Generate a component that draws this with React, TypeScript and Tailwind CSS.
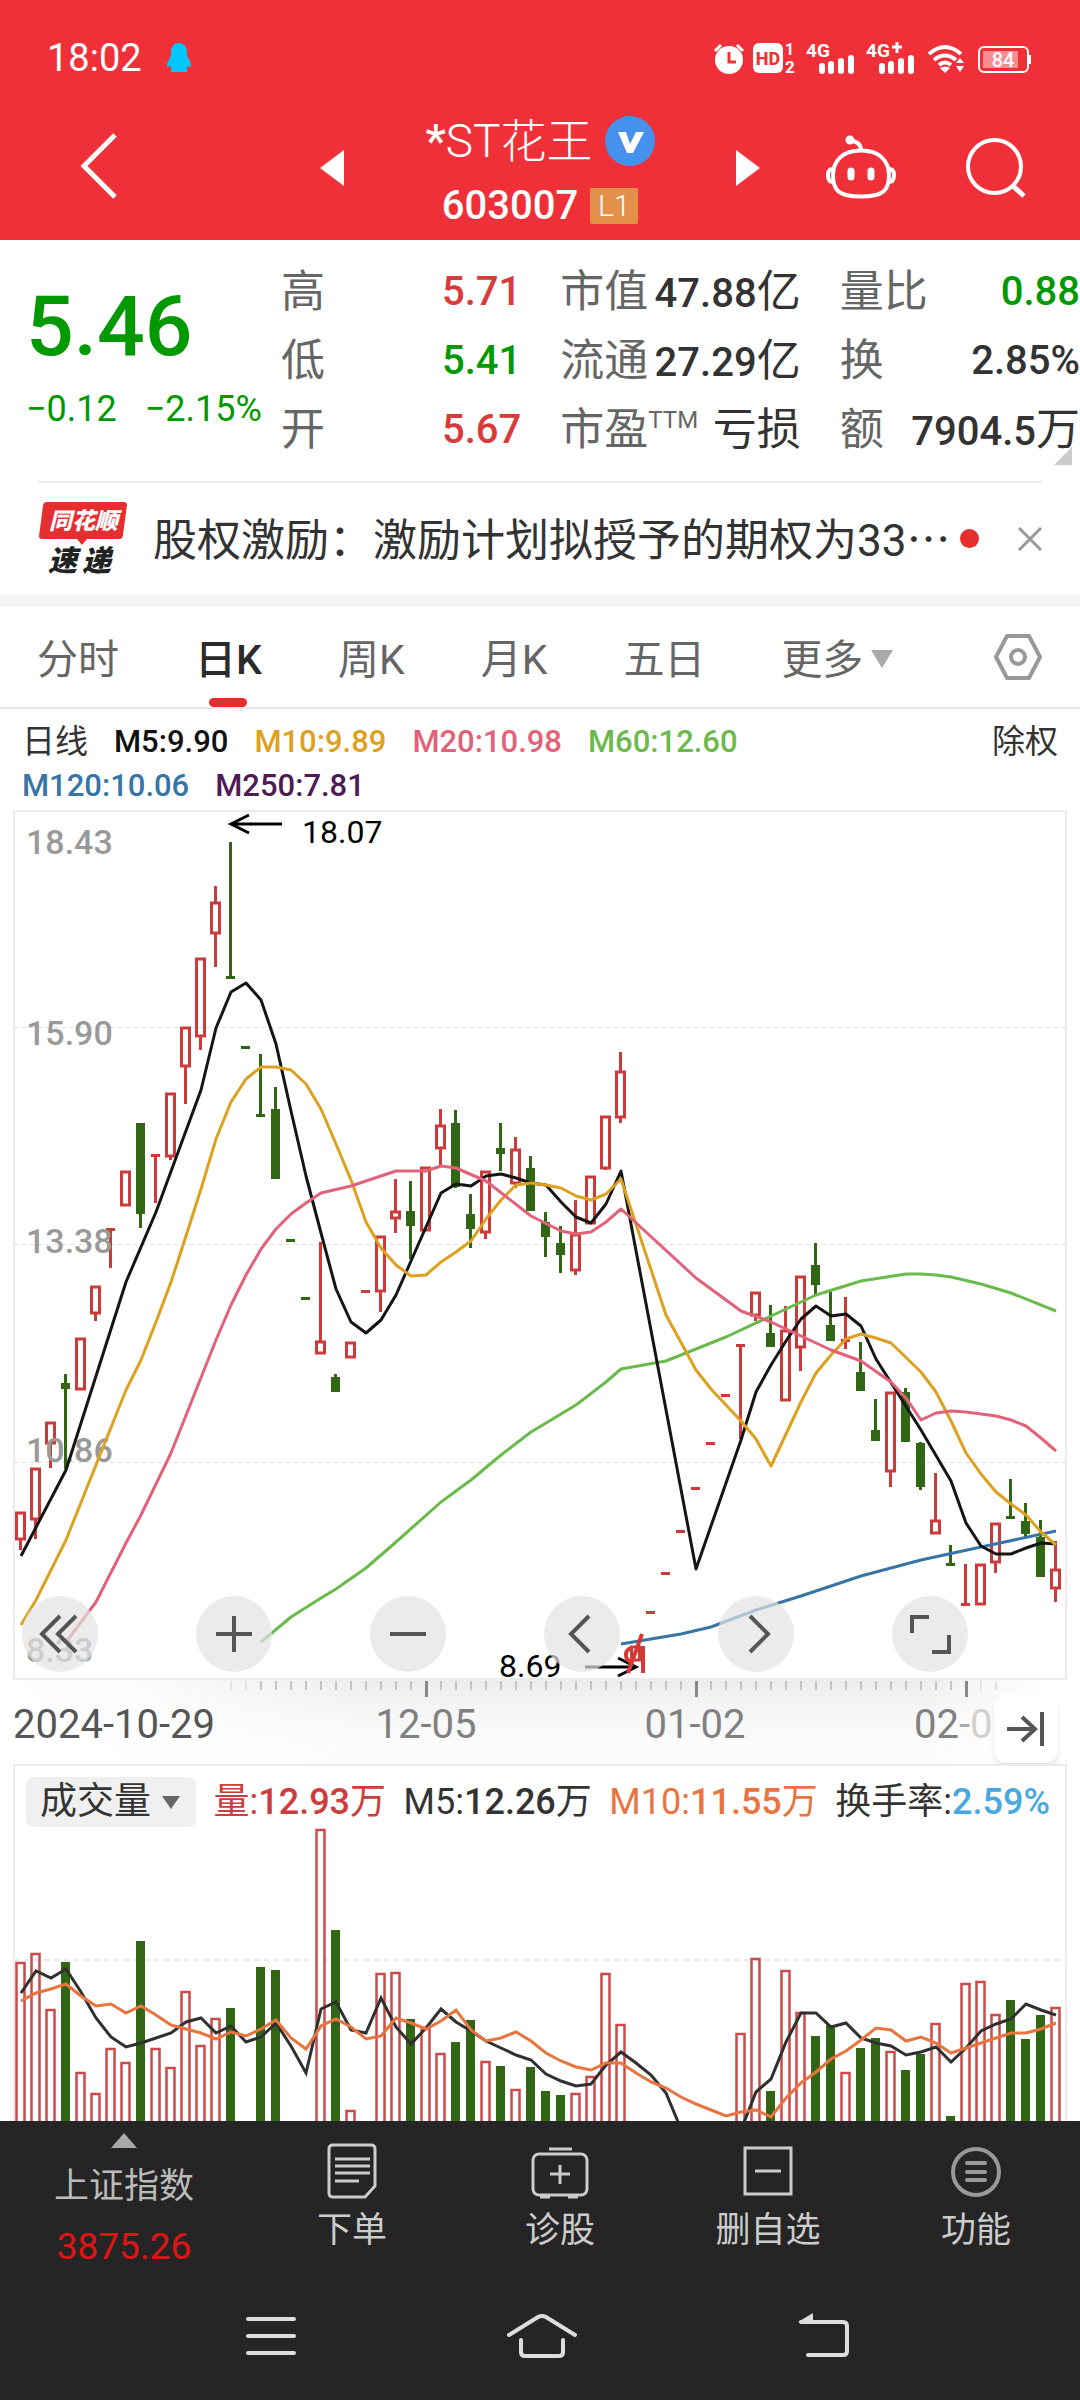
import React from 'react';

type Kind = 'up' | 'down';
// kind, high, body top, body bottom, low
type Candle = [Kind, number, number, number, number];
type Point = [number, number];

const STEP = 15;
const FIRST_X = 20;
const slotX = (i: number) => FIRST_X + i * STEP + 1;

const candles: Candle[] = [
  ['up', 1512, 1512, 1539, 1550],
  ['up', 1468, 1468, 1519, 1539],
  ['up', 1422, 1422, 1443, 1468],
  ['down', 1374, 1383, 1389, 1469],
  ['up', 1338, 1338, 1389, 1389],
  ['up', 1286, 1286, 1313, 1321],
  ['up', 1229, 1229, 1229, 1268],
  ['up', 1171, 1171, 1205, 1205],
  ['down', 1123, 1123, 1214, 1228],
  ['up', 1155, 1155, 1155, 1203],
  ['up', 1093, 1093, 1156, 1160],
  ['up', 1027, 1027, 1066, 1104],
  ['up', 958, 958, 1036, 1050],
  ['up', 886, 902, 933, 967],
  ['down', 842, 976, 978, 978],
  ['down', 1046, 1046, 1048, 1048],
  ['down', 1054, 1114, 1116, 1116],
  ['down', 1087, 1109, 1179, 1179],
  ['down', 1239, 1239, 1241, 1241],
  ['down', 1297, 1297, 1299, 1299],
  ['up', 1242, 1341, 1353, 1353],
  ['down', 1374, 1377, 1392, 1392],
  ['up', 1342, 1342, 1357, 1357],
  ['up', 1291, 1291, 1291, 1291],
  ['up', 1236, 1236, 1291, 1312],
  ['up', 1179, 1211, 1218, 1233],
  ['down', 1181, 1211, 1226, 1259],
  ['up', 1167, 1167, 1230, 1230],
  ['up', 1109, 1125, 1148, 1165],
  ['down', 1110, 1123, 1187, 1188],
  ['down', 1194, 1214, 1229, 1248],
  ['up', 1171, 1171, 1232, 1239],
  ['down', 1123, 1148, 1154, 1171],
  ['up', 1137, 1149, 1183, 1188],
  ['down', 1156, 1168, 1211, 1211],
  ['down', 1212, 1222, 1237, 1257],
  ['down', 1226, 1243, 1255, 1273],
  ['up', 1200, 1234, 1270, 1275],
  ['up', 1176, 1176, 1223, 1223],
  ['up', 1116, 1116, 1168, 1170],
  ['up', 1052, 1071, 1117, 1123],
  ['up', 1646, 1646, 1660, 1660],
  ['up', 1612, 1612, 1612, 1612],
  ['up', 1573, 1573, 1573, 1573],
  ['up', 1531, 1531, 1531, 1531],
  ['up', 1488, 1488, 1488, 1488],
  ['up', 1443, 1443, 1443, 1443],
  ['up', 1395, 1395, 1395, 1395],
  ['up', 1345, 1345, 1345, 1439],
  ['up', 1292, 1292, 1315, 1321],
  ['down', 1305, 1333, 1347, 1347],
  ['up', 1306, 1330, 1400, 1400],
  ['up', 1276, 1276, 1347, 1371],
  ['down', 1243, 1265, 1285, 1296],
  ['down', 1292, 1325, 1341, 1341],
  ['up', 1297, 1340, 1340, 1349],
  ['down', 1342, 1372, 1391, 1391],
  ['down', 1399, 1430, 1441, 1441],
  ['up', 1392, 1392, 1471, 1487],
  ['down', 1388, 1392, 1442, 1442],
  ['down', 1442, 1443, 1487, 1490],
  ['up', 1473, 1520, 1533, 1533],
  ['down', 1545, 1563, 1565, 1565],
  ['up', 1564, 1604, 1604, 1604],
  ['up', 1564, 1564, 1604, 1604],
  ['up', 1523, 1523, 1562, 1573],
  ['down', 1479, 1516, 1519, 1519],
  ['down', 1503, 1521, 1534, 1537],
  ['down', 1520, 1537, 1577, 1577],
  ['up', 1541, 1569, 1588, 1602],
];

const averages: { name: string; color: string; width: number; points: Point[] }[] = [
  {
    name: 'M60',
    color: '#6aba4c',
    width: 3,
    points: [[16, 1642], [18, 1617], [20, 1598], [21, 1589], [23, 1568], [25, 1542], [28, 1502], [30, 1480], [32, 1455], [34, 1432], [37, 1405], [39, 1382], [40, 1369], [43, 1361], [45, 1349], [47, 1337], [50, 1316], [53, 1295], [56, 1281], [59, 1274], [60, 1274], [61, 1275], [62, 1277], [64, 1284], [66, 1293], [69, 1311]],
  },
  {
    name: 'M120',
    color: '#3675a5',
    width: 3,
    points: [[40, 1644], [44, 1634], [46, 1627], [49, 1610], [52, 1596], [56, 1576], [60, 1560], [64, 1547], [69, 1531]],
  },
  {
    name: 'M5',
    color: '#151515',
    width: 3,
    points: [[0, 1556], [3, 1470], [7, 1282], [9, 1212], [12, 1090], [13, 1028], [14, 992], [15, 983], [16, 1000], [17, 1044], [18, 1111], [19, 1176], [20, 1233], [21, 1289], [22, 1322], [23, 1333], [24, 1320], [25, 1295], [26, 1261], [28, 1193], [29, 1184], [30, 1186], [31, 1176], [32, 1174], [33, 1178], [34, 1183], [35, 1185], [36, 1202], [37, 1217], [38, 1223], [39, 1204], [40, 1171], [45, 1569], [48, 1440], [49, 1392], [50, 1365], [51, 1341], [52, 1319], [53, 1306], [54, 1316], [55, 1314], [56, 1326], [57, 1359], [60, 1430], [62, 1481], [63, 1523], [64, 1546], [65, 1554], [66, 1554], [67, 1548], [68, 1543], [69, 1544]],
  },
  {
    name: 'M10',
    color: '#dda11f',
    width: 3,
    points: [[0, 1625], [1, 1600], [3, 1540], [7, 1390], [8, 1360], [9, 1322], [10, 1282], [11, 1236], [12, 1189], [13, 1139], [14, 1102], [15, 1079], [16, 1067], [17, 1067], [18, 1070], [19, 1084], [20, 1109], [21, 1144], [22, 1180], [23, 1222], [24, 1248], [25, 1265], [26, 1276], [27, 1275], [28, 1262], [29, 1252], [30, 1241], [31, 1219], [32, 1200], [33, 1185], [34, 1183], [35, 1185], [36, 1188], [37, 1196], [38, 1200], [39, 1194], [40, 1179], [43, 1315], [45, 1370], [46, 1389], [48, 1421], [49, 1439], [50, 1466], [51, 1434], [52, 1402], [53, 1373], [54, 1355], [55, 1339], [56, 1334], [57, 1338], [58, 1343], [60, 1372], [61, 1392], [62, 1421], [63, 1453], [64, 1474], [65, 1492], [66, 1504], [67, 1515], [68, 1532], [69, 1545]],
  },
  {
    name: 'M20',
    color: '#e2627a',
    width: 3,
    points: [[3, 1642], [5, 1602], [7, 1543], [8, 1515], [10, 1453], [13, 1340], [14, 1305], [15, 1275], [16, 1249], [17, 1229], [18, 1214], [19, 1203], [20, 1193], [22, 1186], [25, 1171], [27, 1171], [28, 1166], [29, 1168], [31, 1181], [34, 1216], [36, 1231], [37, 1234], [38, 1232], [39, 1222], [40, 1209], [45, 1278], [47, 1300], [48, 1311], [50, 1322], [54, 1350], [56, 1361], [58, 1382], [59, 1398], [60, 1420], [61, 1413], [62, 1411], [63, 1412], [65, 1416], [66, 1420], [67, 1426], [68, 1438], [69, 1451]],
  },
];

// slot, top, kind
const volumes: [number, number, Kind][] = [
  [0, 1962, 'up'], [1, 1953, 'up'], [2, 2009, 'up'], [3, 1962, 'down'], [4, 2072, 'up'],
  [5, 2093, 'up'], [6, 2048, 'up'], [7, 2062, 'up'], [8, 1941, 'down'], [9, 2048, 'up'],
  [10, 2067, 'up'], [11, 1991, 'up'], [12, 2045, 'up'], [13, 2018, 'up'], [14, 2008, 'down'],
  [16, 1967, 'down'], [17, 1970, 'down'], [20, 1829, 'up'], [21, 1930, 'down'], [22, 2110, 'up'],
  [24, 1973, 'up'], [25, 1972, 'up'], [26, 2019, 'down'], [27, 2027, 'up'], [28, 2053, 'up'],
  [29, 2042, 'down'], [30, 2020, 'down'], [31, 2061, 'up'], [32, 2066, 'down'], [33, 2089, 'up'],
  [34, 2067, 'down'], [35, 2091, 'down'], [36, 2095, 'down'], [37, 2093, 'up'], [38, 2076, 'up'],
  [39, 1973, 'up'], [40, 2024, 'up'], [48, 2033, 'up'], [49, 1958, 'up'], [50, 2091, 'down'],
  [51, 1970, 'up'], [52, 2012, 'up'], [53, 2036, 'down'], [54, 2025, 'down'], [55, 2072, 'up'],
  [56, 2048, 'down'], [57, 2038, 'down'], [58, 2051, 'up'], [59, 2070, 'down'], [60, 2054, 'down'],
  [61, 2023, 'up'], [62, 2116, 'down'], [63, 1983, 'up'], [64, 1981, 'up'], [65, 2014, 'up'],
  [66, 2000, 'down'], [67, 2039, 'down'], [68, 2015, 'down'], [69, 2007, 'up'],
];

const volumeM5 = [
  1993, 1971, 1978, 1969, 1992, 2018, 2037, 2047, 2043, 2038, 2033, 2022, 2018, 2033, 2026, 2042, 2037, 2023,
  2046, 2073, 2009, 2002, 2030, 2033, 1998, 2027, 2044, 2028, 2009, 2022, 2031, 2041, 2048, 2055, 2060, 2074,
  2081, 2086, 2084, 2065, 2052, 2063, 2075, 2093, 2129, 2145, 2160, 2150, 2130, 2092, 2079, 2042, 2013, 2013,
  2027, 2023, 2038, 2043, 2046, 2055, 2052, 2047, 2062, 2048, 2031, 2024, 2019, 2004, 2010, 2015,
];
const volumeM10 = [
  2001, 1993, 1989, 1984, 1996, 2006, 2004, 2013, 2006, 2015, 2025, 2029, 2033, 2039, 2032, 2036, 2029, 2020,
  2038, 2049, 2026, 2019, 2027, 2039, 2036, 2018, 2023, 2029, 2021, 2010, 2030, 2041, 2038, 2032, 2041, 2053,
  2061, 2067, 2070, 2063, 2063, 2073, 2082, 2088, 2097, 2104, 2110, 2116, 2112, 2110, 2117, 2098, 2083, 2072,
  2059, 2051, 2040, 2028, 2030, 2041, 2037, 2043, 2053, 2048, 2043, 2038, 2033, 2033, 2029, 2023,
];

const priceLabels: [string, number][] = [
  ['18.43', 854],
  ['15.90', 1045],
  ['13.38', 1253],
  ['10.86', 1462],
  ['8.33', 1662],
];

const toPath = (points: Point[]) => points.map(([i, y]) => `${slotX(i)},${y}`).join(' ');

function StatusBar() {
  return (
    <div className="flex h-[112px] items-center justify-between pt-1 pr-[47px] pl-[47px]">
      <div className="flex items-center gap-6">
        <span className="text-[38px] leading-none">18:02</span>
        <svg viewBox="0 0 26 30" className="h-[30px] w-[26px]" fill="#00c8ff">
          <path d="M13 0c-5 0-8 4-8 9v4c-2 3-4 7-4 10 0 2 1 2 3-1 0 2 1 3 2 4-2 1-2 3 0 3h14c2 0 2-2 0-3 1-1 2-2 2-4 2 3 3 3 3 1 0-3-2-7-4-10V9c0-5-3-9-8-9z" />
        </svg>
      </div>
      <svg viewBox="713 36 320 44" className="h-[44px] w-[320px] overflow-visible" fill="#fff">
        <circle cx="729" cy="60" r="14" />
        <path d="M715 51l6-6M743 51l-6-6" stroke="#fff" strokeWidth="3" />
        <path d="M729 52v10h7" stroke="#f03038" strokeWidth="3" fill="none" />
        <rect x="753" y="43" width="30" height="30" rx="6" />
        <text x="768" y="65" fontSize="18" fontWeight="800" textAnchor="middle" fill="#f03038">HD</text>
        <text x="785" y="55" fontSize="16" fontWeight="700">1</text>
        <text x="785" y="73" fontSize="17" fontWeight="700">2</text>
        <text x="806" y="57" fontSize="19" fontWeight="700">4G</text>
        <text x="866" y="57" fontSize="19" fontWeight="700">4G</text>
        <path d="M897 42v11M892 47h10" stroke="#fff" strokeWidth="3" />
        {[819, 879].map((x) => (
          <path key={x} d={`M${x + 3} 66v5M${x + 12} 64v7M${x + 22} 61v10M${x + 32} 58v13`} stroke="#fff" strokeWidth="6" strokeLinecap="round" />
        ))}
        <g fill="none" stroke="#fff" strokeWidth="4">
          <path d="M929 54q16-14 32 0M934 60q11-9 22 0M939 65q6-5 12 0" />
        </g>
        <path d="M940 68q5-3 10 0l-5 5zM956 63l4-5 4 5zM956 66h8l-4 6z" />
        <rect x="979" y="47" width="49" height="25" rx="5" fill="none" stroke="#fff" strokeWidth="2" />
        <rect x="983" y="51" width="35" height="17" opacity=".45" />
        <path d="M1030 55v9" stroke="#fff" strokeWidth="2" />
        <text x="1003" y="67" fontSize="20" fontWeight="500" textAnchor="middle">84</text>
      </svg>
    </div>
  );
}

function TitleBar() {
  return (
    <div className="grid h-[112px] grid-cols-[1fr_440px_1fr] items-center">
      <button aria-label="返回" className="mb-1 ml-20 w-[38px]">
        <svg viewBox="0 0 38 66" className="h-[66px] w-[38px]" fill="none" stroke="#fff" strokeWidth="5">
          <path d="M35 2L4 33l31 31" />
        </svg>
      </button>
      <div className="flex h-full items-center justify-between">
        <button aria-label="上一只">
          <svg viewBox="0 0 24 36" className="h-9 w-6" fill="#fff"><path d="M24 0v36L0 18z" /></svg>
        </button>
        <div className="flex h-full flex-col items-center justify-between">
          <h1 className="flex h-[58px] items-center gap-3 text-[46px] leading-none font-light">
            <span><span className="font-medium">*</span>ST花王</span>
            <svg viewBox="0 0 50 50" className="size-[50px]">
              <circle cx="25" cy="25" r="25" fill="#4791ee" />
              <path d="M13 16h8l4 12 6-12h8L28 37h-6z" fill="#fff" />
            </svg>
          </h1>
          <div className="flex h-9 items-center gap-3">
            <span className="text-[40px] leading-none font-medium">603007</span>
            <span className="flex h-9 w-12 items-center justify-center rounded-xs bg-[#e2904a] text-[30px] leading-none font-light">L1</span>
          </div>
        </div>
        <button aria-label="下一只">
          <svg viewBox="0 0 24 36" className="h-9 w-6" fill="#fff"><path d="M0 0v36l24-18z" /></svg>
        </button>
      </div>
      <div className="flex items-center justify-end gap-[68px] pr-[53px]">
        <button aria-label="智能助手">
          <svg viewBox="825 134 72 66" className="h-[66px] w-[72px]" fill="none" stroke="#fff" strokeWidth="4">
            <path d="M861 149.500c-18 0-28 10-28 25s6 21 28 21 28-6 28-21-10-25-28-25z" />
            <path d="M833 168c-4 0-5 3-5 6s1 7 5 7M889 168c4 0 5 3 5 6s-1 7-5 7M861 150c0-6-3-10-11-10" />
            <circle cx="850" cy="139" r="2.500" />
            <path d="M851 170v6M871 170v6" strokeWidth="7" strokeLinecap="round" />
          </svg>
        </button>
        <button aria-label="搜索">
          <svg viewBox="965 137 62 62" className="size-[62px]" fill="none" stroke="#fff" strokeWidth="4">
            <circle cx="994.500" cy="166.500" r="26.500" />
            <path d="M1013 186l11 10" strokeWidth="5" />
          </svg>
        </button>
      </div>
    </div>
  );
}

interface StatProps {
  label: string;
  value: string;
  unit?: string;
  sup?: string;
  tone?: string;
}

const stats: StatProps[] = [
  { label: '高', value: '5.71', tone: 'text-[#d93a3a]' },
  { label: '市值', value: '47.88', unit: '亿' },
  { label: '量比', value: '0.88', tone: 'text-[#009900]' },
  { label: '低', value: '5.41', tone: 'text-[#009900]' },
  { label: '流通', value: '27.29', unit: '亿' },
  { label: '换', value: '2.85%' },
  { label: '开', value: '5.67', tone: 'text-[#d93a3a]' },
  { label: '市盈', value: '', unit: '亏损', sup: 'TTM' },
  { label: '额', value: '7904.5', unit: '万' },
];

function Stat({ label, value, unit, sup, tone = 'text-[#333]' }: StatProps) {
  return (
    <div className="flex h-[69px] items-center justify-between leading-none whitespace-nowrap">
      <dt className="flex text-[44px] text-[#666]">
        {label}
        {sup && <span className="text-[24px]">{sup}</span>}
      </dt>
      <dd className={`text-[40px] font-medium ${tone}`}>
        {value}
        {unit && <span className="text-[44px] font-normal">{unit}</span>}
      </dd>
    </div>
  );
}

function QuotePanel() {
  return (
    <section className="relative flex pt-[17px] pb-[17px]">
      <div className="w-[281px] shrink-0 pt-5 pl-[26px] text-[#009900]">
        <p className="text-[84px] leading-[100px] font-medium">5.46</p>
        <p className="mt-2 flex gap-[28px] text-[36px] leading-[48px] whitespace-nowrap">
          <span>−0.12</span>
          <span>−2.15%</span>
        </p>
      </div>
      <dl className="grid flex-1 grid-cols-3 gap-x-[39px]">
        {stats.map((s) => <Stat key={s.label} {...s} />)}
      </dl>
      <svg viewBox="0 0 18 18" className="absolute right-2 bottom-4 size-[18px]" fill="#ccc"><path d="M18 0v18H0z" /></svg>
    </section>
  );
}

function NewsBar() {
  return (
    <section className="mx-[38px] flex h-[113px] items-center border-t-2 border-[#ececec]">
      <svg viewBox="38 500 90 76" className="h-[76px] w-[90px] shrink-0 overflow-visible">
        <path d="M47 501h77q3 0 3 3l-4 30q0 4-4 4H87l-5 6-5-6H42q-3 0-3-3l4-30q0-4 4-4z" fill="#e62e30" />
        <text x="49" y="528" fontSize="23" fontWeight="900" fontStyle="italic" fill="#fff">同花顺</text>
        <text x="48" y="570" fontSize="29" fontWeight="900" fontStyle="italic" fill="#222">速</text>
        <text x="82" y="570" fontSize="29" fontWeight="900" fontStyle="italic" fill="#222">递</text>
      </svg>
      <a href="#news" className="ml-[25px] flex-1 text-[44px] leading-[60px] whitespace-nowrap text-[#333]">
        股权激励：激励计划拟授予的期权为33<span className="font-['Noto_Sans_CJK_SC']">…</span>
      </a>
      <span className="size-[19px] shrink-0 rounded-full bg-[#e62e2e]" />
      <button aria-label="关闭" className="ml-[39px] shrink-0">
        <svg viewBox="0 0 24 24" className="size-6" stroke="#999" strokeWidth="3"><path d="M1 1l22 22M23 1L1 23" /></svg>
      </button>
    </section>
  );
}

const periods = ['分时', '日K', '周K', '月K', '五日'];

function PeriodTabs() {
  return (
    <nav className="flex h-[102px] items-stretch gap-[76px] border-b-2 border-[#e8e8e8] pr-[38px] pl-[37px] text-[41px] text-[#666]">
      {periods.map((p) => {
        const active = p === '日K';
        return (
          <button key={p} className={`relative pt-2 ${active ? 'font-medium text-[#2b2b2b]' : ''}`}>
            {p}
            {active && <span className="absolute bottom-0 left-1/2 h-[9px] w-[38px] -translate-x-1/2 rounded-full bg-[#e62e2e]" />}
          </button>
        );
      })}
      <button className="flex items-center gap-2 pt-2">
        更多
        <svg viewBox="0 0 22 18" className="mb-1 h-[18px] w-[22px]" fill="#aaa"><path d="M0 0h22L11 18z" /></svg>
      </button>
      <button aria-label="设置" className="ml-auto">
        <svg viewBox="0 0 48 48" className="size-12" fill="none" stroke="#999" strokeWidth="4" strokeLinejoin="round">
          <path d="M13 3h22l11 21-11 21H13L2 24z" />
          <circle cx="24" cy="24" r="7" />
        </svg>
      </button>
    </nav>
  );
}

function AverageLegend() {
  return (
    <div className="flex justify-between pt-[11px] pr-[22px] pb-[2px] pl-[22px] text-[33px] leading-[44px] text-[#333]">
      <div className="flex max-w-[740px] flex-wrap gap-x-[26px] text-[31px] font-medium">
        <span className="text-[33px] font-normal">日线</span>
        <span className="text-[#111]">M5:9.90</span>
        <span className="text-[#dda11f]">M10:9.89</span>
        <span className="text-[#e2627a]">M20:10.98</span>
        <span className="text-[#6aba4c]">M60:12.60</span>
        <span className="text-[#3675a5]">M120:10.06</span>
        <span className="text-[#4f1a55]">M250:7.81</span>
      </div>
      <span>除权</span>
    </div>
  );
}

function CandleMark({ i, candle }: { i: number; candle: Candle }) {
  const [kind, high, top, bottom, low] = candle;
  const x = slotX(i) - 0.5;
  const color = kind === 'up' ? '#cc3a3a' : '#306614';
  if (kind === 'down') {
    return (
      <g fill={color}>
        <rect x={x - 1.5} y={high} width="3" height={low - high} />
        <rect x={x - 4.5} y={top} width="9" height={Math.max(bottom - top, 3)} />
      </g>
    );
  }
  if (bottom - top < 3) {
    return (
      <g fill={color}>
        <rect x={x - 1.5} y={high} width="3" height={low - high} />
        <rect x={x - 4.5} y={top - 1} width="9" height="3" />
      </g>
    );
  }
  return (
    <g fill={color}>
      <rect x={x - 1.5} y={high} width="3" height={top - high} />
      <rect x={x - 1.5} y={bottom} width="3" height={low - bottom} />
      <rect x={x - 4} y={top + 1} width="8" height={bottom - top - 1} fill="none" stroke={color} strokeWidth="3" />
    </g>
  );
}

const chartTools = [
  { label: '最早', d: 'M26 8L8 26l18 18M42 8L24 26l18 18' },
  { label: '放大', d: 'M8 26h36M26 8v36' },
  { label: '缩小', d: 'M8 26h36' },
  { label: '左移', d: 'M33 8L15 26l18 18' },
  { label: '右移', d: 'M20 8l18 18-18 18' },
  { label: '全屏', d: 'M8 25V9h17M28 44h17V27' },
];

function PriceChart() {
  return (
    <section className="relative">
      <svg viewBox="0 810 1080 954" className="block w-full">
        <defs>
          <linearGradient id="axisDown" x1="0" y1="0" x2="0" y2="1">
            <stop offset="0" stopColor="#ededed" />
            <stop offset="0.5" stopColor="#f8f8f8" />
            <stop offset="1" stopColor="#fdfdfd" />
          </linearGradient>
          <linearGradient id="axisSide" x1="0" y1="0" x2="1" y2="0">
            <stop offset="0" stopColor="#fff" />
            <stop offset="0.1" stopColor="#fff" stopOpacity="0.9" />
            <stop offset="0.35" stopColor="#fff" stopOpacity="0" />
            <stop offset="0.85" stopColor="#fff" stopOpacity="0" />
            <stop offset="0.97" stopColor="#fff" />
          </linearGradient>
        </defs>
        <rect x="0" y="1680" width="1080" height="84" fill="url(#axisDown)" />
        <rect x="0" y="1680" width="1080" height="84" fill="url(#axisSide)" />
        <rect x="14" y="811" width="1052" height="868" fill="#fff" stroke="#ebebeb" strokeWidth="2" />
        <path d="M14 1027.500h1052M14 1244.500h1052M14 1462.500h1052" stroke="#dedede" strokeDasharray="4 4" />

        {candles.map((c, i) => <CandleMark key={i} i={i} candle={c} />)}

        <g fontSize="34" fontWeight="500" fill="#999">
          {priceLabels.map(([text, y]) => <text key={text} x="26" y={y}>{text}</text>)}
        </g>

        {averages.map((a) => (
          <polyline key={a.name} points={toPath(a.points)} fill="none" stroke={a.color} strokeWidth={a.width} strokeLinejoin="round" />
        ))}

        <g stroke="#000" strokeWidth="3" fill="none">
          <path d="M282 824h-50M249 815l-18 9 18 9" />
          <path d="M585 1667h50M618 1658l18 9-18 9" />
        </g>
        <path d="M642 1634l-14 39M632 1648q-6 1-6 7t6 7M643 1646v27" stroke="#d93636" strokeWidth="4" fill="none" />
        <g fontSize="32">
          <text x="302" y="843">18.07</text>
          <text x="499" y="1677">8.69</text>
        </g>

        {Array.from({ length: 52 }, (_, n) => n + 14).map((i) => {
          const major = i === 27 || i === 45 || i === 63;
          const faded = i < 16 || i > 63;
          return (
            <rect key={i} x={slotX(i) - 1} y="1681" width={major ? 3 : 2} height={major ? 16 : 9} fill={major ? '#888' : faded ? '#e2e2e2' : '#c4c4c4'} />
          );
        })}
        <g fontSize="40" fill="#808080">
          <text x="13" y="1738" fill="#555">2024-10-29</text>
          <text x="426" y="1738" textAnchor="middle">12-05</text>
          <text x="695" y="1738" textAnchor="middle">01-02</text>
          <text x="914" y="1738">02<tspan fill="#aaa">-</tspan><tspan fill="#d0d0d0">0</tspan></text>
        </g>
      </svg>
      <div className="absolute inset-x-0 bottom-[92px] flex justify-between pr-[112px] pl-[22px]">
        {chartTools.map((t) => (
          <button key={t.label} aria-label={t.label} className="flex size-[76px] items-center justify-center rounded-full bg-[#e3e3e3]/70">
            <svg viewBox="0 0 52 52" className="size-[52px]" fill="none" stroke="#555" strokeWidth="4">
              <path d={t.d} />
            </svg>
          </button>
        ))}
      </div>
      <button aria-label="跳到最新" className="absolute right-[22px] bottom-px flex h-[69px] w-16 items-center justify-center rounded-xl bg-white shadow-md">
        <svg viewBox="0 0 40 36" className="h-9 w-10" fill="none" stroke="#555" strokeWidth="4">
          <path d="M1 18h27M16 6l13 12-13 12M36 1v34" />
        </svg>
      </button>
    </section>
  );
}

function VolumeChart() {
  return (
    <section className="relative min-h-0 flex-1 overflow-hidden">
      <svg viewBox="0 1764 1080 420" className="block w-full">
        <rect x="14" y="1765" width="1052" height="440" fill="#fff" stroke="#ebebeb" strokeWidth="2" />
        <path d="M14 1960h1052" stroke="#e8e8e8" strokeWidth="2" strokeDasharray="5 5" />
        {volumes.map(([i, top, kind]) =>
          kind === 'down' ? (
            <rect key={i} x={slotX(i) - 5} y={top} width="9" height={2200 - top} fill="#306614" />
          ) : (
            <rect key={i} x={slotX(i) - 4.5} y={top + 1} width="8" height={2200 - top} fill="none" stroke="#cc4a4a" strokeWidth="2.5" />
          )
        )}
        <polyline points={toPath(volumeM5.map((y, i) => [i, y]))} fill="none" stroke="#303030" strokeWidth="3" />
        <polyline points={toPath(volumeM10.map((y, i) => [i, y]))} fill="none" stroke="#e8743f" strokeWidth="3" />
      </svg>
      <div className="absolute inset-x-0 top-[13px] flex items-center justify-between pr-[30px] pl-[26px] text-[36px] leading-[50px] whitespace-nowrap text-[#333]">
        <div className="relative">
          <select aria-label="指标" defaultValue="vol" className="block h-[50px] w-[170px] appearance-none rounded-lg bg-[#f0f0f0] pl-[14px] text-[37px] leading-[50px]">
            <option value="vol">成交量</option>
          </select>
          <svg viewBox="0 0 18 13" className="pointer-events-none absolute top-[19px] right-4 h-[13px] w-[18px]" fill="#666"><path d="M0 0h18L9 13z" /></svg>
        </div>
        <span className="text-[#cc3d3d]">量:<b className="font-medium">12.93</b>万</span>
        <span>M5:<b className="font-medium">12.26</b>万</span>
        <span className="text-[#e8743f]">M10:<b className="font-medium">11.55</b>万</span>
        <span>换手率:<b className="font-medium text-[#4aa8e0]">2.59%</b></span>
      </div>
    </section>
  );
}

function BottomBar() {
  return (
    <footer className="bg-[#252525] text-[#ccc]">
      <div className="grid h-[146px] grid-cols-[248fr_208fr_208fr_208fr_208fr] text-[35px] leading-[50px]">
        <button className="flex flex-col items-center pt-3">
          <svg viewBox="0 0 26 15" className="h-[15px] w-[26px]" fill="#aaa"><path d="M13 0l13 15H0z" /></svg>
          <span className="mt-[14px] text-[#bbb]">上证指数</span>
          <span className="mt-[10px] text-[37px] text-[#e01414]">3875.26</span>
        </button>
        <button className="flex flex-col items-center pt-[22px]">
          <svg viewBox="0 0 56 56" className="size-14" fill="none" stroke="#ccc" strokeWidth="3">
            <path d="M9 2h38q4 0 4 4v37L41 54H9q-4 0-4-4V6q0-4 4-4z" />
            <path d="M11 16h35M11 23h35M11 30h35M11 38h24" />
          </svg>
          <span className="mt-[7px]">下单</span>
        </button>
        <button className="flex flex-col items-center pt-[22px]">
          <svg viewBox="0 0 60 56" className="h-14 w-[60px]" fill="none" stroke="#ccc" strokeWidth="3">
            <rect x="3" y="11" width="54" height="41" rx="6" />
            <path d="M19 6h23M10 54h10M38 54h10M30 22v19M20 31h20" />
          </svg>
          <span className="mt-[7px]">诊股</span>
        </button>
        <button className="flex flex-col items-center pt-[22px]">
          <svg viewBox="0 0 56 56" className="size-14" fill="none" stroke="#ccc" strokeWidth="3">
            <rect x="5" y="5" width="46" height="46" />
            <path d="M15 28h26" />
          </svg>
          <span className="mt-[7px]">删自选</span>
        </button>
        <button className="flex flex-col items-center pt-[22px]">
          <svg viewBox="0 0 56 56" className="size-14" fill="none" stroke="#999" strokeWidth="4">
            <circle cx="28" cy="29" r="23" />
            <path d="M19 20h18M19 29h18M19 37h18" strokeLinecap="round" />
          </svg>
          <span className="mt-[7px]">功能</span>
        </button>
      </div>
      <div className="flex h-[133px] items-center justify-between pt-1 pr-[229px] pl-[245px]">
        <button aria-label="最近任务">
          <svg viewBox="0 0 52 42" className="h-[42px] w-[52px]" stroke="#ddd" strokeWidth="4" strokeLinecap="round">
            <path d="M3 4h46M3 21h46M3 38h46" />
          </svg>
        </button>
        <button aria-label="主页" className="pr-[10px]">
          <svg viewBox="0 0 72 46" className="h-[46px] w-[72px]" fill="none" stroke="#ddd" strokeWidth="4" strokeLinecap="round">
            <path d="M3 22L32 4q4-2 8 0l29 18M15 27v12q0 4 4 4h34q4 0 4-4V27" />
          </svg>
        </button>
        <button aria-label="后退">
          <svg viewBox="0 0 54 46" className="h-[46px] w-[54px]" fill="none" stroke="#ddd" strokeWidth="4" strokeLinecap="round">
            <path d="M4 9h42q4 0 4 4v25q0 4-4 4H11" />
            <path d="M1 9L16 0v9z" fill="#ddd" stroke="none" />
          </svg>
        </button>
      </div>
    </footer>
  );
}

export default function App() {
  return (
    <div className="flex h-screen flex-col overflow-hidden bg-white font-['Roboto','Noto_Sans_CJK_SC',sans-serif]">
      <header className="shrink-0 bg-[#f03038] pb-4 text-white">
        <StatusBar />
        <TitleBar />
      </header>
      <main className="flex min-h-0 flex-1 flex-col">
        <QuotePanel />
        <NewsBar />
        <div className="h-[13px] shrink-0 bg-[#f4f4f4]" />
        <PeriodTabs />
        <AverageLegend />
        <PriceChart />
        <VolumeChart />
      </main>
      <BottomBar />
    </div>
  );
}
